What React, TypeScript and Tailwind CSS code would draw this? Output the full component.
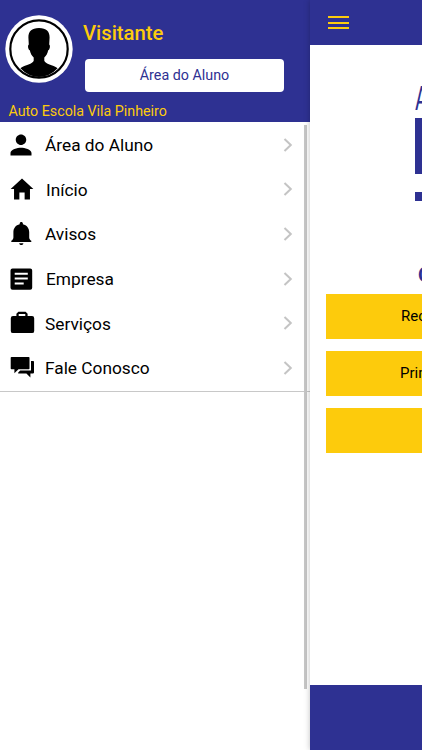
import type { ReactNode } from "react";
import { IoMdHome, IoMdPerson } from "react-icons/io";

type MenuItem = { label: string; icon: ReactNode; indent: string };

function Glyph({ children }: { children: ReactNode }) {
  return (
    <svg viewBox="0 0 28 28" className="h-7 w-7 shrink-0" fill="#000">
      {children}
    </svg>
  );
}

const bell = (
  <Glyph>
    <path d="M12.700 3.600c0-1 .7-1.600 1.600-1.600s1.600.6 1.600 1.600v.7c3.900.9 6.300 4 6.300 7.800v5.300c0 1.400.8 2.400 2.100 3.400v1.200h-20v-1.200c1.300-1 2.100-2 2.100-3.400v-5.300c0-3.800 2.400-6.900 6.300-7.800z" />
    <path d="M12.200 23.200h4.200c0 1.100-1 1.800-2.100 1.800s-2.100-.7-2.100-1.800z" />
  </Glyph>
);

const listBox = (
  <Glyph>
    <path
      fillRule="evenodd"
      d="M4.500 3.500h17.700a2 2 0 0 1 2 2v17.200a2 2 0 0 1-2 2H4.500a2 2 0 0 1-2-2V5.500a2 2 0 0 1 2-2zM6.700 7.700v2h13.100v-2zM6.700 12.600v2h13.100v-2zM6.700 17.500v2h9v-2z"
    />
  </Glyph>
);

const briefcase = (
  <Glyph>
    <path
      fillRule="evenodd"
      d="M11.400 2.800h7.200l2 2v2.300H25a2.200 2.200 0 0 1 2.200 2.200v12.600a2.200 2.200 0 0 1-2.200 2.200H6a2.200 2.200 0 0 1-2.200-2.200V9.300A2.200 2.200 0 0 1 6 7.100h3.400V4.800zM11.700 4.900v2.200h6.600V4.900z"
    />
  </Glyph>
);

const chat = (
  <Glyph>
    <path d="M4.500 3h17.200a.8.800 0 0 1 .8.800v10.600a.8.800 0 0 1-.8.800H11.500L7.400 19.300v-4.100H4.500a.8.800 0 0 1-.8-.8V3.800a.8.800 0 0 1 .8-.8z" />
    <path d="M24 7h2.200a.8.800 0 0 1 .8.800v10.800a.8.800 0 0 1-.8.800h-2.800v4l-4-4h-8.200v-1l2-2H24z" />
  </Glyph>
);

const menu: MenuItem[] = [
  { label: "Área do Aluno", icon: <IoMdPerson size={28} />, indent: "pl-[7px]" },
  { label: "Início", icon: <IoMdHome size={28} />, indent: "pl-2" },
  { label: "Avisos", icon: bell, indent: "pl-[7px]" },
  { label: "Empresa", icon: listBox, indent: "pl-2" },
  { label: "Serviços", icon: briefcase, indent: "pl-[7px]" },
  { label: "Fale Conosco", icon: chat, indent: "pl-[7px]" },
];

function Avatar() {
  return (
    <svg viewBox="0 0 68 68" className="h-[68px] w-[68px] shrink-0">
      <circle cx="34" cy="34" r="33.7" fill="#fff" />
      <circle cx="34" cy="34" r="28.700" fill="none" stroke="#000" strokeWidth="2.200" />
      <path
        d="M34 13c-7.500 0-10.600 3.500-10.600 9.500l.4 7c-1.300.6-.8 5.200 1 5.800.7 3.200 1.900 5.400 3.900 7.200v3.300c-.8 3.200-8.600 4.200-13.300 7.400A27 27 0 0 0 34 62a27 27 0 0 0 18.600-8.800c-4.700-3.200-12.500-4.200-13.300-7.400v-3.300c2-1.800 3.200-4 3.900-7.200 1.800-.6 2.300-5.200 1-5.800l.4-7c0-6-3.100-9.500-10.600-9.500z"
        fill="#000"
      />
    </svg>
  );
}

function Chevron() {
  return (
    <svg viewBox="0 0 10 16" className="h-4 w-2.5" fill="none" stroke="#c4c4c4" strokeWidth="2">
      <path d="M1.500 2 7.800 8l-6.300 6" />
    </svg>
  );
}

function Drawer() {
  return (
    <aside className="relative h-full w-[310px] shrink-0 bg-white">
      <header className="h-[122.400px] bg-[#2e3192] pl-[5px] pt-[15px]">
        <div className="flex">
          <Avatar />
          <div className="ml-2.5 pt-1">
            <div className="text-[20.300px] font-medium leading-7 text-[#fdcb0c]">Visitante</div>
            <button className="ml-0.5 mt-3 block h-[33px] w-[199px] rounded-[4px] bg-white text-[14.300px] leading-[33px] text-[#2e3192]">
              Área do Aluno
            </button>
          </div>
        </div>
        <div className="ml-[3.500px] mt-2 text-[14.250px] leading-[22px] text-[#fdcb0c]">Auto Escola Vila Pinheiro</div>
      </header>
      <nav className="border-b border-[#c8c8c8]">
        {menu.map(({ label, icon, indent }) => (
          <a key={label} className={`flex h-[44.700px] items-center pr-[17px] ${indent}`}>
            {icon}
            <span className="ml-2.5 flex-1 pt-[2.500px] text-[17.300px] text-black">{label}</span>
            <Chevron />
          </a>
        ))}
      </nav>
      {/* scrollbar */}
      <div className="absolute right-[3px] top-[125px] h-[564px] w-[3px] bg-[#c6c6c6]" />
    </aside>
  );
}

function HomePage() {
  return (
    <main className="relative flex h-full w-28 shrink-0 flex-col bg-white shadow-[0_0_6px_rgba(0,0,0,0.25)]">
      <div className="h-[45px] shrink-0 bg-[#2e3192] pl-[18px] pt-4">
        <div className="flex w-[21px] flex-col gap-[3.500px]">
          <span className="h-[2px] bg-[#fdcb0c]" />
          <span className="h-[2px] bg-[#fdcb0c]" />
          <span className="h-[2px] bg-[#fdcb0c]" />
        </div>
      </div>
      <div className="h-[249.400px] shrink-0 overflow-hidden pl-[105px] pt-[34px] text-[#2e3192]">
        <div className="h-[39px] text-[34px] leading-[39px]">
          <span className="inline-block origin-left scale-x-[0.6]">A</span>
        </div>
        <div className="h-14 w-2 bg-[#2e3192]" />
        <div className="mt-[18px] h-[9px] w-2 bg-[#2e3192]" />
        <div className="ml-[3px] mt-[60px] text-[20px] font-bold leading-7">O</div>
      </div>
      <div className="flex flex-col gap-3 overflow-hidden pl-4 text-[15px] text-black">
        <div className="h-[45px] bg-[#fdcb0c] pl-[75px] leading-[44px]">Rec</div>
        <div className="h-[45px] bg-[#fdcb0c] pl-[74px] leading-[44px]">Prim</div>
        <div className="h-[45px] bg-[#fdcb0c]" />
      </div>
      <footer className="mt-auto h-[65.500px] shrink-0 bg-[#2e3192]" />
    </main>
  );
}

export default function App() {
  return (
    <div className="flex h-[750px] w-[422px] overflow-hidden bg-white font-['Roboto',sans-serif]">
      <Drawer />
      <HomePage />
    </div>
  );
}
